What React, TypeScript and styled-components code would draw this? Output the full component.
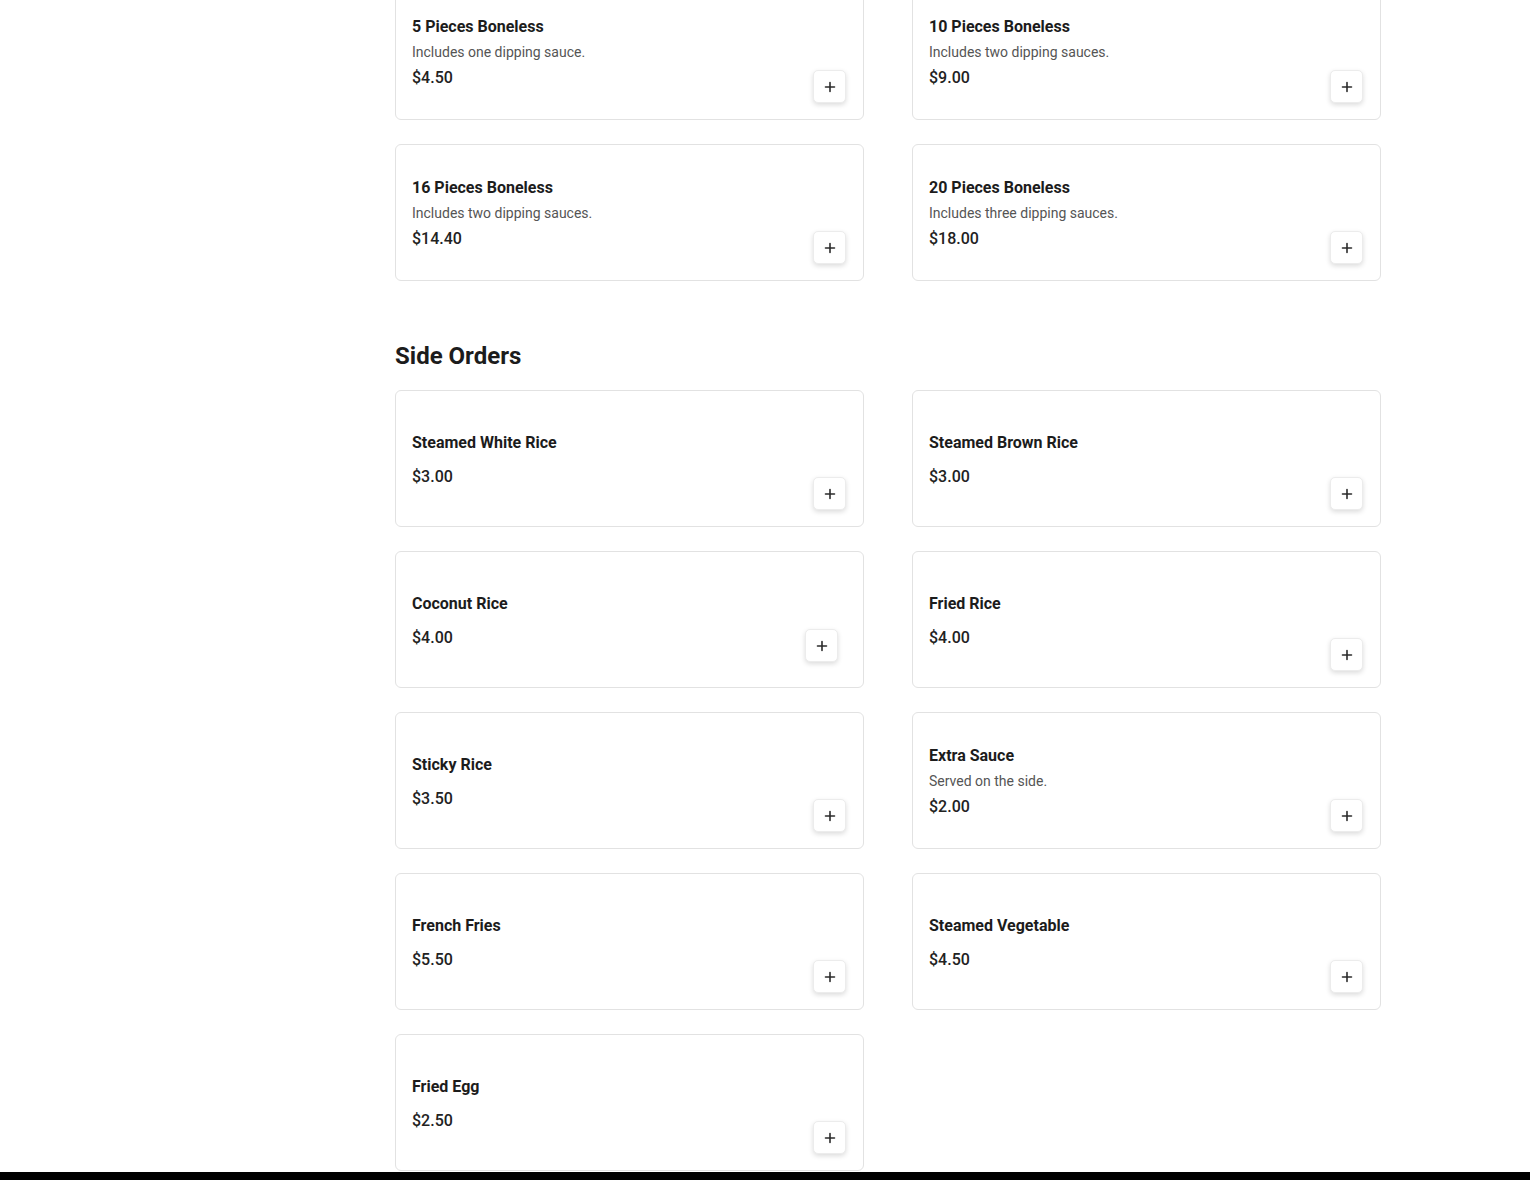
import React from 'react';
import styled, { createGlobalStyle } from 'styled-components';

type Item = {
  name: string;
  description?: string;
  price: string;
  nudged?: boolean;
};

const boneless: Item[] = [
  { name: '5 Pieces Boneless', description: 'Includes one dipping sauce.', price: '$4.50' },
  { name: '10 Pieces Boneless', description: 'Includes two dipping sauces.', price: '$9.00' },
  { name: '16 Pieces Boneless', description: 'Includes two dipping sauces.', price: '$14.40' },
  { name: '20 Pieces Boneless', description: 'Includes three dipping sauces.', price: '$18.00' },
];

const sides: Item[] = [
  { name: 'Steamed White Rice', price: '$3.00' },
  { name: 'Steamed Brown Rice', price: '$3.00' },
  { name: 'Coconut Rice', price: '$4.00', nudged: true },
  { name: 'Fried Rice', price: '$4.00' },
  { name: 'Sticky Rice', price: '$3.50' },
  { name: 'Extra Sauce', description: 'Served on the side.', price: '$2.00' },
  { name: 'French Fries', price: '$5.50' },
  { name: 'Steamed Vegetable', price: '$4.50' },
  { name: 'Fried Egg', price: '$2.50' },
];

const PlusIcon = () => (
  <svg width="12" height="12" viewBox="0 0 12 12" fill="none">
    <path d="M6 1.5v9M1.5 6h9" stroke="#2b2b2b" strokeWidth="1.6" strokeLinecap="round" />
  </svg>
);

const MenuCard = ({ item }: { item: Item }) => (
  <Card>
    <Info>
      <ItemName>{item.name}</ItemName>
      {item.description && <ItemDescription>{item.description}</ItemDescription>}
      <Price $spaced={!item.description}>{item.price}</Price>
    </Info>
    <AddButton $nudged={item.nudged} aria-label={`Add ${item.name}`}>
      <PlusIcon />
    </AddButton>
  </Card>
);

export default function App() {
  return (
    <>
      <GlobalStyle />
      <Layout>
        <Sidebar />
        <Main>
          <Section $scrolled>
            <Grid>
              {boneless.map((item) => (
                <MenuCard key={item.name} item={item} />
              ))}
            </Grid>
          </Section>
          <Section>
            <SectionTitle>Side Orders</SectionTitle>
            <Grid>
              {sides.map((item) => (
                <MenuCard key={item.name} item={item} />
              ))}
            </Grid>
          </Section>
        </Main>
      </Layout>
      <BottomBar />
    </>
  );
}

const GlobalStyle = createGlobalStyle`
  html, body {
    margin: 0;
    padding: 0;
    background: #ffffff;
  }
  body {
    font-family: Roboto, "Liberation Sans", Arial, sans-serif;
    color: #1a1a1a;
    overflow: hidden;
  }
`;

const Layout = styled.div`
  display: flex;
  width: 100%;
  height: 1180px;
  overflow: hidden;
`;

const Sidebar = styled.aside`
  flex: 0 0 246px;
`;

const Main = styled.main`
  flex: 1;
  display: flex;
  flex-direction: column;
  align-items: center;
  gap: 59px;
`;

const Section = styled.section<{ $scrolled?: boolean }>`
  width: 986px;
  display: flex;
  flex-direction: column;
  margin-top: ${(p) => (p.$scrolled ? '-17px' : '0')};
`;

const SectionTitle = styled.h2`
  margin: 0 0 18px;
  font-size: 24px;
  line-height: 32px;
  font-weight: 700;
  color: #1c1c1c;
`;

const Grid = styled.div`
  display: grid;
  grid-template-columns: 1fr 1fr;
  column-gap: 48px;
  row-gap: 24px;
`;

const Card = styled.div`
  box-sizing: border-box;
  display: flex;
  align-items: center;
  justify-content: space-between;
  height: 137px;
  padding: 16px 17px 16px 16px;
  border: 1px solid #e2e2e2;
  border-radius: 6px;
  background: #fff;
`;

const Info = styled.div`
  display: flex;
  flex-direction: column;
  padding-top: 2px;
`;

const ItemName = styled.h3`
  margin: 0 0 3px;
  font-size: 16px;
  line-height: 24px;
  font-weight: 700;
  color: #1c1c1c;
`;

const ItemDescription = styled.p`
  margin: 0 0 4px;
  font-size: 14px;
  line-height: 20px;
  color: #555;
`;

const Price = styled.span<{ $spaced?: boolean }>`
  margin-top: ${(p) => (p.$spaced ? '7px' : '0')};
  font-size: 16px;
  line-height: 24px;
  font-weight: 500;
  color: #222;
`;

const AddButton = styled.button<{ $nudged?: boolean }>`
  align-self: flex-end;
  display: flex;
  align-items: center;
  justify-content: center;
  width: 33px;
  height: 33px;
  padding: 0;
  border: 1px solid #ececec;
  border-radius: 5px;
  background: #fff;
  box-shadow: 0 2px 5px rgba(0, 0, 0, 0.14);
  cursor: pointer;
  transform: ${(p) => (p.$nudged ? 'translate(-8px, -9px)' : 'none')};
`;

const BottomBar = styled.div`
  position: fixed;
  left: 0;
  right: 0;
  bottom: 0;
  height: 8px;
  background: #000;
`;
